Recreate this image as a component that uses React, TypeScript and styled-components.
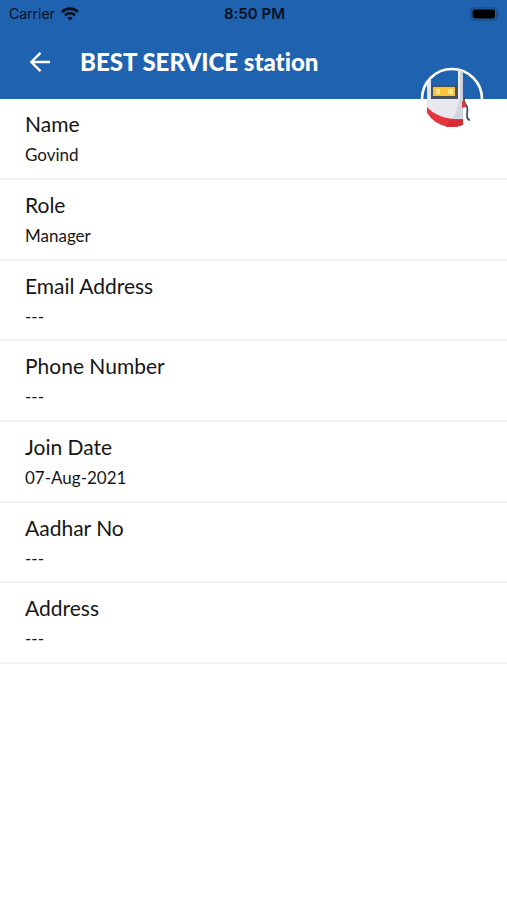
import React from "react";
import styled, { createGlobalStyle } from "styled-components";

const GlobalStyle = createGlobalStyle`
  * { box-sizing: border-box; }
  body {
    margin: 0;
    background: #fff;
    color: #161616;
    font-family: Lato, "Liberation Sans", sans-serif;
    font-variant-ligatures: none;
  }
`;

const Header = styled.header`
  position: relative;
  height: 99px;
  background: #1f62b0;
`;

const StatusBar = styled.div`
  display: grid;
  grid-template-columns: 1fr auto 1fr;
  align-items: center;
  height: 27px;
  padding: 0 7px 0 9px;
  color: #05101f;
  font-family: Inter, "Liberation Sans", sans-serif;
  font-size: 14px;
  line-height: 16px;
`;

const Carrier = styled.div`
  display: flex;
  align-items: center;
  gap: 6px;
`;

const Clock = styled.time`
  font-size: 15px;
  font-weight: 600;
`;

const BatteryIcon = styled.svg`
  justify-self: end;
`;

const TitleBar = styled.div`
  display: flex;
  align-items: center;
  gap: 24px;
  height: 70px;
  padding: 0 24px;
`;

const BackButton = styled.button`
  display: flex;
  align-items: center;
  justify-content: center;
  width: 32px;
  height: 32px;
  padding: 0;
  border: 0;
  background: none;
  color: #fff;
  cursor: pointer;
`;

const Title = styled.h1`
  margin: 0;
  color: #fff;
  font-size: 24px;
  font-weight: 900;
  line-height: 30px;
  white-space: nowrap;
`;

const Avatar = styled.svg`
  position: absolute;
  right: 23px;
  bottom: -31px;
`;

const Details = styled.dl`
  margin: 0;
`;

const Field = styled.div`
  padding: 11px 25px 13px;
  border-bottom: 2px solid #f1f1f1;

  &:nth-child(3n) {
    padding-bottom: 12px;
  }
`;

const Label = styled.dt`
  font-size: 21px;
  line-height: 28px;
`;

const Value = styled.dd`
  margin: 6px 0 0;
  font-size: 17px;
  line-height: 21px;
`;

const fields = [
  { label: "Name", value: "Govind" },
  { label: "Role", value: "Manager" },
  { label: "Email Address", value: "---" },
  { label: "Phone Number", value: "---" },
  { label: "Join Date", value: "07-Aug-2021" },
  { label: "Aadhar No", value: "---" },
  { label: "Address", value: "---" },
];

function Wifi() {
  return (
    <svg width="18" height="14" viewBox="0 0 18 14" fill="none" stroke="currentColor" strokeWidth="2.6" aria-hidden="true">
      <path d="M1 5C5.4.5 12.6.5 17 5" />
      <path d="M4 8.3c2.8-2.7 7.2-2.7 10 0" />
      <path d="M6.3 10.9C7.8 9.4 10.2 9.4 11.7 10.9L9 13.6Z" fill="currentColor" stroke="none" />
    </svg>
  );
}

function Battery() {
  return (
    <BatteryIcon width="30" height="14" viewBox="0 0 30 14" aria-hidden="true">
      <rect x="0.8" y="0.8" width="26" height="12.4" rx="3.6" fill="none" stroke="#174a85" strokeWidth="1.3" />
      <rect x="2.6" y="2.5" width="22.4" height="9" rx="2" fill="#000" />
      <path d="M28.3 5v4c1.6-.6 1.6-3.4 0-4Z" fill="#174a85" />
    </BatteryIcon>
  );
}

function StationLogo() {
  return (
    <Avatar width="64" height="66" viewBox="0 0 64 66" role="img" aria-label="Fuel pump">
      <defs>
        <clipPath id="badge">
          <circle cx="32" cy="34" r="29" />
        </clipPath>
      </defs>
      <circle cx="32" cy="35" r="30" fill="none" stroke="#fff" strokeWidth="2.6" />
      <g clipPath="url(#badge)">
        <path d="M7 12h4v24H7Z" fill="#e3e6ee" />
        <path d="M38 4h5v32h-5Z" fill="#cdd2df" />
        <path d="M38 4h2v32h-2Z" fill="#eceef3" />
        <path d="M7 35h36v30H7Z" fill="#e8e9ef" />
        <path d="M39 35h4v30H24C33 56 38 46 39 35Z" fill="#d2d6e1" />
        <path d="M7 43c7 8 19 13 36 12v10H7Z" fill="#e5363d" />
        <path d="M30 55c4 1 8 1 13 0v9H24c3-3 5-6 6-9Z" fill="#d52d38" />
      </g>
      <rect x="11" y="21" width="27" height="14" fill="#47515d" />
      <rect x="13" y="23" width="22" height="9" fill="#fbc437" />
      <path d="M16 25h4v5h-4ZM28 25h5v5h-5Z" fill="#ffe391" />
      <path d="M44 33v5M45 40c4 2 2 7 2 11 0 3 1 5 3 5" fill="none" stroke="#46515e" strokeWidth="1.8" />
      <path d="M42 37l4 1v5l-4 1Z" fill="#e5363d" />
    </Avatar>
  );
}

export default function App() {
  return (
    <>
      <GlobalStyle />
      <Header>
        <StatusBar>
          <Carrier>
            Carrier
            <Wifi />
          </Carrier>
          <Clock>8:50 PM</Clock>
          <Battery />
        </StatusBar>
        <TitleBar>
          <BackButton type="button" aria-label="Back">
            <svg width="22" height="22" viewBox="0 0 22 22" fill="none" stroke="currentColor" strokeWidth="2.4" aria-hidden="true">
              <path d="M21 11H2.5M11.5 1.8L2.3 11l9.2 9.2" />
            </svg>
          </BackButton>
          <Title>BEST SERVICE station</Title>
        </TitleBar>
        <StationLogo />
      </Header>
      <main>
        <Details>
          {fields.map((field) => (
            <Field key={field.label}>
              <Label>{field.label}</Label>
              <Value>{field.value}</Value>
            </Field>
          ))}
        </Details>
      </main>
    </>
  );
}
